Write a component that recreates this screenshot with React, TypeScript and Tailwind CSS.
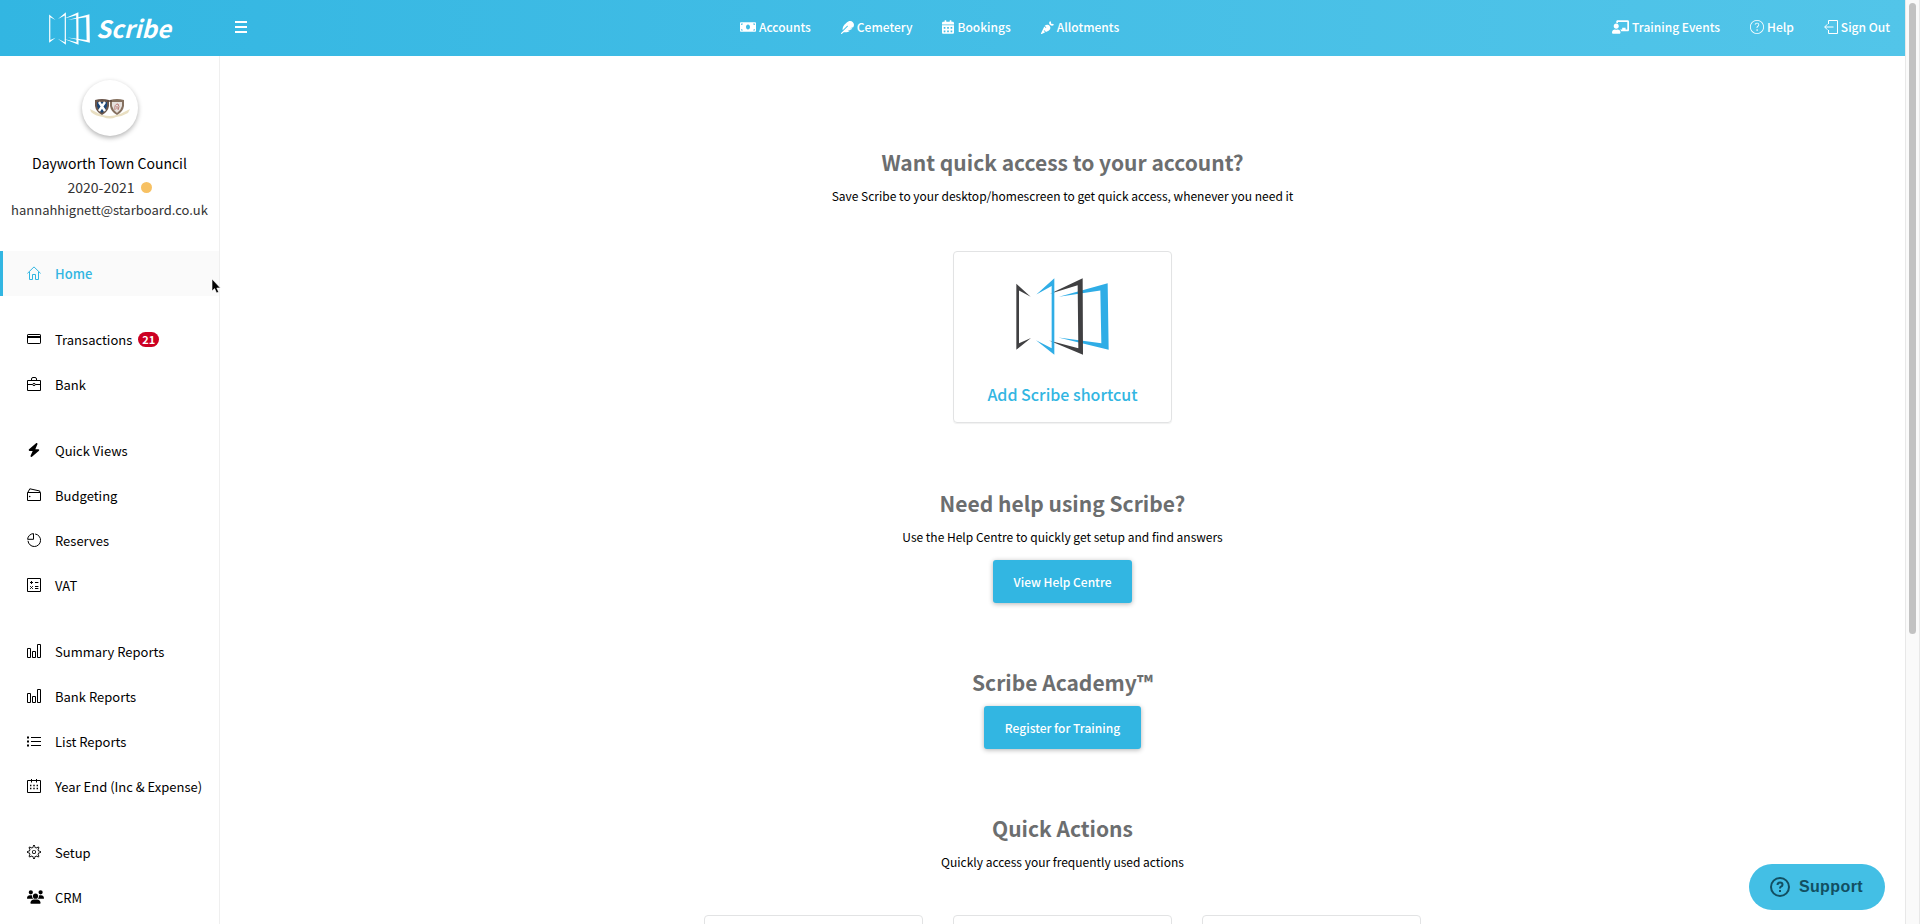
import type { ReactNode } from "react";
import { FaMoneyBill, FaFeather, FaCalendarAlt, FaCarrot, FaChalkboardTeacher } from "react-icons/fa";
import { FaBolt, FaUsers } from "react-icons/fa6";
import { TfiHelpAlt, TfiSettings } from "react-icons/tfi";

type LogoProps = { className: string; dark: string; light: string };

function LogoMark({ className, dark, light }: LogoProps) {
  return (
    <svg viewBox="636 446 279 230" preserveAspectRatio="none" className={className} aria-hidden="true">
      <path className={light} d="M911 462 L765 502 L889 483 L892 641 L763 624 L914 660 Z" />
      <path className={dark} d="M637 463 L680 502 L645 483 V641 L681 625 L637 660 Z" />
      <path className={dark} d="M836 447 L738 493 L821 468 L823 656 L735 633 L837 675 Z" />
      <path className={light} d="M751 447 L697 495 L743 470 V656 L696 632 L751 675 Z" />
    </svg>
  );
}

function Crest() {
  return (
    <svg viewBox="0 0 40 20" className="mt-0.5 w-10" aria-hidden="true">
      <path d="M0 10 L6 13 Q12 17 20 17 Q29 16 34 13 L40 10 L38 14 Q33 17 26 18 Q20 21 13 18 Q5 17 1 13 Z" fill="#e9dfc2" />
      <path d="M5 1 Q12 -1 19 1 V7 Q18 13 12 16 Q6 13 5 7 Z" fill="#6a564b" />
      <path d="M7 3 H17 V7 Q16 11 12 14 Q8 11 7 7 Z" fill="#1d4676" />
      <path d="M9 3 L15 12 M15 3 L9 12" stroke="#fff" strokeWidth="2.4" />
      <path d="M20 1 Q27 -1 34 1 V7 Q33 13 27 16 Q21 13 20 7 Z" fill="#85705f" />
      <path d="M22 3 H32 V7 Q31 11 27 14 Q23 11 22 7 Z" fill="#e6e1de" />
      <path d="M25 11 Q24 5 28 5 Q30 7 28 11 M27 7 V10" stroke="#b97a76" strokeWidth="1" fill="none" />
      <path d="M17 2 H22" stroke="#5b463c" strokeWidth="1.5" />
    </svg>
  );
}

function LineIcon({ children }: { children: ReactNode }) {
  return (
    <svg viewBox="0 0 14 14" className="size-3.5" fill="none" stroke="currentColor" aria-hidden="true">
      {children}
    </svg>
  );
}

const homeIcon = (
  <LineIcon>
    <path d="M.4 7.4 L7 .9 L13.6 7.4 M2.5 6 V13.5 H5.5 V8.5 H8.5 V13.5 H11.5 V6" />
  </LineIcon>
);
const cardIcon = (
  <LineIcon>
    <rect x=".5" y="2.5" width="13" height="9" rx=".6" />
    <path d="M0 5 H14" strokeWidth="2" />
  </LineIcon>
);
const briefcaseIcon = (
  <LineIcon>
    <path d="M.5 3.5 H13.5 V13.5 H.5 Z M4.5 3.5 V2 Q4.5 .5 6 .5 H8 Q9.5 .5 9.5 2 V3.5 M.5 7.5 H5.7 M8.3 7.5 H13.5" />
    <circle cx="7" cy="7.5" r="1.2" />
  </LineIcon>
);
const walletIcon = (
  <LineIcon>
    <path d="M.5 4.5 H13.5 V12.5 H.5 Z M.8 4.5 L2.8 .8 L12.8 3 V4.5" />
    <circle cx="2.7" cy="8.5" r=".8" fill="currentColor" stroke="none" />
  </LineIcon>
);
const pieIcon = (
  <LineIcon>
    <path d="M8.2 1 A6.3 6.3 0 1 1 1 7.8 M6.5 .6 V6.3 H.6 A6.2 6.2 0 0 1 6.5 .6 Z" />
  </LineIcon>
);
const calculatorIcon = (
  <LineIcon>
    <path d="M.5 .5 H13.5 V13.5 H.5 Z M3 4.5 H6 M4.5 3 V6 M8 4.5 H11.4 M8 8.5 H11.4 M8 10.5 H11.4 M3.2 8.2 L5.8 10.8 M5.8 8.2 L3.2 10.8" />
  </LineIcon>
);
const barsIcon = (
  <LineIcon>
    <path d="M.5 4.5 H3.5 V13.5 H.5 Z M5.5 7.5 H8.5 V13.5 H5.5 Z M10.5 .5 H13.5 V13.5 H10.5 Z" />
  </LineIcon>
);
const listIcon = (
  <LineIcon>
    <path d="M4 3.5 H14 M4 7.5 H14 M4 11.5 H14" />
    <path d="M0 3.5 H2 M0 7.5 H2 M0 11.5 H2" strokeWidth="2" />
  </LineIcon>
);
const calendarIcon = (
  <LineIcon>
    <path d="M.5 1.5 H13.5 V13.5 H.5 Z M4.5 0 V3.5 M9.5 0 V3.5" />
    <path d="M3 6.5 H11 M3 9.5 H11" strokeWidth="1.4" strokeDasharray="1.4 1.9" />
  </LineIcon>
);
const signOutIcon = (
  <LineIcon>
    <path d="M4.5 4 V.5 H13.5 V13.5 H4.5 V10 M9.5 7 H.8 M3.3 4.3 L.7 7 L3.3 9.7" />
  </LineIcon>
);

type Item = { label: string; icon: ReactNode; badge?: number; active?: boolean };

const groups: Item[][] = [
  [{ label: "Home", icon: homeIcon, active: true }],
  [
    { label: "Transactions", icon: cardIcon, badge: 21 },
    { label: "Bank", icon: briefcaseIcon },
  ],
  [
    { label: "Quick Views", icon: <FaBolt className="size-3.5" /> },
    { label: "Budgeting", icon: walletIcon },
    { label: "Reserves", icon: pieIcon },
    { label: "VAT", icon: calculatorIcon },
  ],
  [
    { label: "Summary Reports", icon: barsIcon },
    { label: "Bank Reports", icon: barsIcon },
    { label: "List Reports", icon: listIcon },
    { label: "Year End (Inc & Expense)", icon: calendarIcon },
  ],
  [
    { label: "Setup", icon: <TfiSettings className="size-3.5" /> },
    { label: "CRM", icon: <FaUsers className="h-3.5 w-[17px]" /> },
  ],
];

function TopLink({ icon, children }: { icon: ReactNode; children: ReactNode }) {
  return (
    <a href="#" className="flex items-center gap-[3px] text-[12px] leading-5 font-medium whitespace-nowrap">
      {icon}
      {children}
    </a>
  );
}

function Header() {
  return (
    <header className="flex h-14 shrink-0 items-center bg-linear-to-r from-[#32b6e2] to-[#52c5e9] text-white">
      <a href="#" className="flex w-[220px] shrink-0 items-center justify-center gap-1.5">
        <LogoMark className="h-[33px] w-[41px]" dark="fill-white" light="fill-white" />
        <span className="text-[24px] leading-8 font-bold italic">Scribe</span>
      </a>
      <div className="flex grow items-center justify-between px-[15px] pb-0.5">
        <button type="button" aria-label="Toggle menu" className="flex w-3 flex-col gap-[3px]">
          <span className="h-0.5 bg-white" />
          <span className="h-0.5 bg-white" />
          <span className="h-0.5 bg-white" />
        </button>
        <nav className="flex items-center gap-[30px]">
          <TopLink icon={<FaMoneyBill className="h-3.5 w-4" />}>Accounts</TopLink>
          <TopLink icon={<FaFeather className="size-[13px]" />}>Cemetery</TopLink>
          <TopLink icon={<FaCalendarAlt className="h-3.5 w-3" />}>Bookings</TopLink>
          <TopLink icon={<FaCarrot className="size-[13px]" />}>Allotments</TopLink>
        </nav>
        <nav className="flex items-center gap-[30px]">
          <TopLink icon={<FaChalkboardTeacher className="h-3.5 w-[17px]" />}>Training Events</TopLink>
          <TopLink icon={<TfiHelpAlt className="size-3.5" />}>Help</TopLink>
          <TopLink icon={signOutIcon}>Sign Out</TopLink>
        </nav>
      </div>
    </header>
  );
}

function Sidebar() {
  return (
    <aside className="relative flex w-[220px] shrink-0 flex-col border-r border-[#efefef]">
      <div className="flex flex-col items-center pt-6 text-[#333]">
        <div className="flex size-14 items-center justify-center rounded-full bg-white shadow-[0_2px_5px_rgba(0,0,0,0.3)]">
          <Crest />
        </div>
        <p className="mt-[15px] text-[14px] leading-6 text-black">Dayworth Town Council</p>
        <p className="flex items-center gap-1.5 text-[14px] leading-6">
          2020-2021 <span className="size-[11px] rounded-full bg-[#f7c163]" />
        </p>
        <p className="text-[13px] leading-[22px]">hannahhignett@starboard.co.uk</p>
      </div>
      <nav className="mt-[30px] flex flex-col gap-[21px]">
        {groups.map((group) => (
          <ul key={group[0].label}>
            {group.map((item) => (
              <li key={item.label}>
                <a
                  href="#"
                  className={
                    item.active
                      ? "flex h-[45px] items-center border-l-3 border-[#32b6e2] bg-[#fafafa] pl-6 text-[13px] font-medium text-[#32b6e2]"
                      : "flex h-[45px] items-center border-l-3 border-transparent pl-6 text-[13px] text-black"
                  }
                >
                  <span className="flex w-7 shrink-0 items-center pb-0.5">{item.icon}</span>
                  <span className="whitespace-nowrap">{item.label}</span>
                  {item.badge && (
                    <span className="ml-1.5 rounded-full bg-[#cc0022] px-1 text-[11px] leading-[15px] font-bold text-white">
                      {item.badge}
                    </span>
                  )}
                </a>
              </li>
            ))}
          </ul>
        ))}
      </nav>
      <svg viewBox="0 0 10 15" className="absolute top-[223px] left-[211px] h-[15px] w-2.5" aria-hidden="true">
        <path d="M1 0 V12 L3.6 9.6 L5.6 14 L7.6 13 L5.8 9 H9.4 Z" fill="#000" stroke="#fff" strokeWidth=".6" />
      </svg>
    </aside>
  );
}

function Title({ children }: { children: ReactNode }) {
  return <h2 className="text-[21px] leading-8 font-bold text-[#6c6e6f]">{children}</h2>;
}

function ActionButton({ children }: { children: ReactNode }) {
  return (
    <button
      type="button"
      className="h-[43px] rounded-[3px] bg-[#32b6e2] px-[21px] text-[12px] font-medium text-white shadow-[0_1px_5px_rgba(0,0,0,0.3)]"
    >
      {children}
    </button>
  );
}

function Main() {
  return (
    <main className="flex grow flex-col items-center text-[12px] leading-5 text-black">
      <section className="flex flex-col items-center pt-[90px]">
        <Title>Want quick access to your account?</Title>
        <p className="mt-2">Save Scribe to your desktop/homescreen to get quick access, whenever you need it</p>
        <a
          href="#"
          className="mt-[45px] flex h-[172px] w-[219px] flex-col items-center rounded border border-[#e2e3e4] pt-[26px] text-[16px] leading-6 text-[#32b6e2] shadow-[0_1px_1px_rgba(0,0,0,0.06)]"
        >
          <LogoMark className="h-[77px] w-[93px]" dark="fill-[#404042]" light="fill-[#2fade6]" />
          <span className="mt-[27px] font-medium">Add Scribe shortcut</span>
        </a>
      </section>
      <section className="flex flex-col items-center pt-16">
        <Title>Need help using Scribe?</Title>
        <p className="mt-2 mb-[13px]">Use the Help Centre to quickly get setup and find answers</p>
        <ActionButton>View Help Centre</ActionButton>
      </section>
      <section className="flex flex-col items-center gap-2 pt-[63px]">
        <Title>Scribe Academy™</Title>
        <ActionButton>Register for Training</ActionButton>
      </section>
      <section className="flex flex-col items-center pt-[63px]">
        <Title>Quick Actions</Title>
        <p className="mt-2">Quickly access your frequently used actions</p>
        <div className="mt-[43px] flex gap-[30px]">
          <div className="h-[172px] w-[219px] rounded border border-[#e2e3e4]" />
          <div className="h-[172px] w-[219px] rounded border border-[#e2e3e4]" />
          <div className="h-[172px] w-[219px] rounded border border-[#e2e3e4]" />
        </div>
      </section>
    </main>
  );
}

export default function App() {
  return (
    <div className="flex h-screen overflow-hidden bg-white font-['Noto_Sans_CJK_SC',sans-serif]">
      <div className="flex min-w-0 grow flex-col">
        <Header />
        <div className="flex min-h-0 grow overflow-hidden">
          <Sidebar />
          <Main />
        </div>
      </div>
      <div className="w-[15px] shrink-0 border-x border-[#e8e8e8] bg-[#fafafa] px-[3px] pt-[3px]" aria-hidden="true">
        <div className="h-[68.5%] rounded-full bg-[#c2c2c2]" />
      </div>
      <button
        type="button"
        className="fixed right-[35px] bottom-3.5 flex h-[46px] items-center gap-2 rounded-full bg-[#43bfe5] pr-[22px] pl-5 font-['Liberation_Sans',sans-serif] text-[16px] font-bold tracking-wide text-[#124f62]"
      >
        <svg viewBox="0 0 22 22" className="size-[22px]" fill="none" stroke="currentColor" strokeWidth="2" aria-hidden="true">
          <circle cx="11" cy="11" r="9" />
          <path d="M8.5 9 Q8.5 6.5 11 6.5 Q13.5 6.5 13.5 8.7 Q13.5 10 12 10.7 Q11 11.2 11 12.6 M11 14 V16" />
        </svg>
        Support
      </button>
    </div>
  );
}
